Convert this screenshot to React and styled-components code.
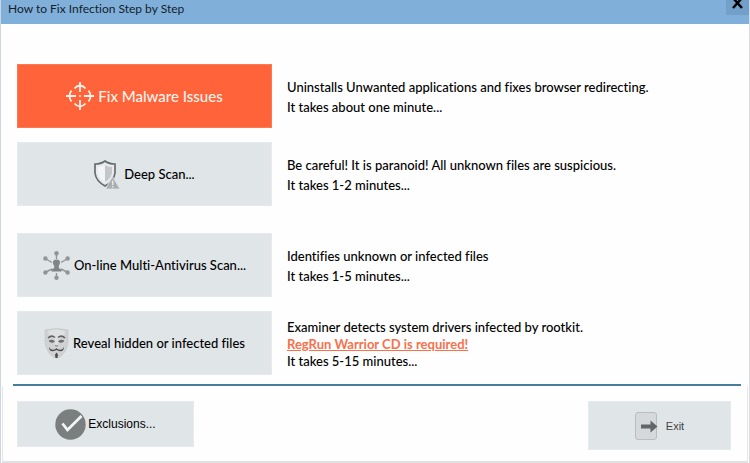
import React from "react";
import styled, { createGlobalStyle } from "styled-components";

const GlobalStyle = createGlobalStyle`
	* {
		box-sizing: border-box;
	}

	body {
		margin: 0;
		background: #fefefe;
		color: #000;
		font-family: Lato, "Open Sans", sans-serif;
		font-size: 13px;
		font-weight: 500;
		font-variant-ligatures: none;
	}

	h1, p {
		margin: 0;
	}
`;

const StyledWindow = styled.div`
	display: flex;
	flex-direction: column;
	min-height: 100vh;
	border-left: 1px solid #cdd5df;
	border-right: 1px solid #d9dce2;
`;

const StyledTitleBar = styled.header`
	display: flex;
	justify-content: space-between;
	align-items: flex-start;
	height: 24px;
	padding-left: 7px;
	background: #80b0da;
`;

const StyledTitle = styled.h1`
	color: #15202b;
	font-size: 12px;
	font-weight: normal;
	line-height: 18px;
`;

const StyledClose = styled.button`
	display: flex;
	justify-content: center;
	width: 23px;
	height: 15px;
	padding: 0;
	border: 0;
	background: #73a0c8;
`;

const StyledSteps = styled.main`
	display: flex;
	flex-direction: column;
	gap: 27px;
	padding: 40px 16px 9px;
`;

const StyledGroup = styled.section`
	display: flex;
	flex-direction: column;
	gap: 14px;
`;

const StyledStep = styled.div`
	display: grid;
	grid-template-columns: 255px 1fr;
	align-items: center;
	gap: 15px;
`;

const StyledButton = styled.button`
	display: flex;
	align-items: center;
	justify-content: center;
	gap: ${({ $gap }) => $gap || "4px"};
	height: ${({ $height }) => $height || "64px"};
	width: ${({ $width }) => $width || "100%"};
	padding: 0;
	border: 1px solid ${({ $primary }) => ($primary ? "#fb7a52" : "#e6eaec")};
	background: ${({ $primary }) => ($primary ? "#ff6339" : "#e0e5e8")};
	color: ${({ $primary }) => ($primary ? "#fff3ee" : "#000")};
	font-family: inherit;
	font-size: ${({ $primary }) => ($primary ? "15px" : "13px")};
	font-weight: inherit;
	font-variant-ligatures: inherit;
	white-space: nowrap;

	& > svg {
		flex-shrink: 0;
	}
`;

const StyledText = styled.div`
	padding-top: 2px;
	line-height: ${({ $tight }) => ($tight ? "17px" : "20px")};
`;

const StyledLink = styled.a`
	color: #f9704b;
	font-weight: bold;
	text-decoration: underline;
`;

const StyledFooter = styled.footer`
	display: flex;
	flex: 1;
	justify-content: space-between;
	align-items: flex-start;
	margin: 0 1px;
	padding: 15px 16px 11px 14px;
	border: 1px solid #e6e6e8;
	border-top: 0;
	border-bottom: 2px solid #e0e0e2;
	font-family: "Liberation Sans", Arial, sans-serif;
`;

const StyledRule = styled.hr`
	width: calc(100% - 20px);
	height: 2px;
	margin: 0 8px 0 12px;
	border: 0;
	background: #477e99;
`;

const StyledLabel = styled.span`
	color: ${({ $muted }) => ($muted ? "#444" : "#000")};
	font-size: ${({ $muted }) => ($muted ? "11px" : "12px")};
`;

function CloseIcon() {
	return (
		<svg width="11" height="9" viewBox="0 0 11 9" stroke="#000" strokeWidth="2.4">
			<path d="M1 -2 L10 8 M10 -2 L1 8" />
		</svg>
	);
}

function TargetIcon() {
	return (
		<svg width="28" height="28" viewBox="0 0 28 28" fill="none" stroke="#fff0e9" strokeWidth="1.8">
			<path d="M14 0v10M14 18v10M0 14h10M18 14h10" />
			<path d="M8.500 6.500Q11 3.500 14 3.500T19.500 6.500M8.500 21.500Q11 24.500 14 24.500T19.500 21.500M5.500 8.500Q3.500 11 3.500 14T5.500 19.500M22.500 8.500Q24.500 11 24.500 14T22.500 19.500" />
			<circle cx="14" cy="14" r="1" fill="#fff0e9" stroke="none" />
		</svg>
	);
}

function ShieldIcon() {
	return (
		<svg width="26" height="29" viewBox="0 0 26 29">
			<path d="M11 1Q15 4 21 4V13Q20 21 11 26Q2 21 1 13V4Q7 4 11 1Z" fill="#e8ebed" stroke="#686c6e" strokeWidth="1.700" />
			<path d="M11 5Q14 7 18 7V13Q17 19 11 22Q5 19 4 13V7Q8 7 11 5Z" fill="#f3f4f5" />
			<path d="M11 5Q14 7 18 7V13Q17 19 11 22Z" fill="#c3c7c9" />
			<path d="M18.500 16.500L26 29H11.500Z" fill="#a9adae" stroke="#e0e5e8" strokeWidth="0.800" />
			<path d="M18.700 20.500V25M18.700 26V27.500" stroke="#e5e9eb" strokeWidth="1.500" />
		</svg>
	);
}

function NetworkIcon() {
	return (
		<svg width="27" height="29" viewBox="0 0 27 29" fill="#909596" stroke="#909596">
			<path d="M13.500 3V8M13.500 22V26M3 8L9 11.500M24 8L18 11.500M3 21L9 18M24 21L18 18" fill="none" strokeWidth="1.400" />
			<g stroke="none">
				<circle cx="13.500" cy="2.300" r="2.200" />
				<circle cx="13.500" cy="26.700" r="2.200" />
				<circle cx="2.400" cy="7.500" r="2.200" />
				<circle cx="24.600" cy="7.500" r="2.200" />
				<circle cx="2.400" cy="21.500" r="2.200" />
				<circle cx="24.600" cy="21.500" r="2.200" />
				<path d="M13.500 8.500C17.500 8.500 17.800 12 15.800 14.800V17L18.500 18.500V20.500H8.500V18.500L11.200 17V14.800C9.200 12 9.500 8.500 13.500 8.500Z" fill="#7f8485" />
			</g>
		</svg>
	);
}

function MaskIcon() {
	return (
		<svg width="25" height="31" viewBox="0 0 25 31" fill="none" stroke="#5e6162">
			<path d="M1 2Q12.500 -1 24 2L24 14Q23 23 17 28Q12.500 32 8 28Q2 23 1 14Z" fill="#cfd1d2" stroke="#bfc3c4" strokeWidth="0.600" />
			<path d="M4 3Q12.500 0 21 3L20 8L14 11V17H11V11L5 8Z" fill="#dfe0e1" stroke="none" />
			<path d="M4 10Q7.500 6.500 11 9.500M14 9.500Q17.500 6.500 21 10" strokeWidth="1.500" />
			<path d="M5 13Q8 11 10.500 13.500Q7.500 15.500 5 13M14.500 13.500Q17 11 20 13Q17.500 15.500 14.500 13.500" fill="#747778" strokeWidth="0.700" />
			<path d="M11 17.500Q12.500 18.500 14 17.500" strokeWidth="0.800" />
			<path d="M5 19Q6.500 22.500 10 21.500Q12 21 12.500 20Q13 21 15 21.500Q18.500 22.500 20 19Q20 24 15 23L12.500 22L10 23Q5 24 5 19Z" fill="#4b4e4f" stroke="none" />
			<path d="M12.500 24.500L14 26.500L13.500 30H11.500L11 26.500Z" fill="#4b4e4f" stroke="none" />
		</svg>
	);
}

function CheckIcon() {
	return (
		<svg width="31" height="31" viewBox="0 0 31 31">
			<circle cx="15.500" cy="15.500" r="15.200" fill="#7b7e7f" />
			<path d="M7.500 14.500L12.500 21L26.500 7" fill="none" stroke="#f4f5f5" strokeWidth="2.800" />
		</svg>
	);
}

function ExitIcon() {
	return (
		<svg width="23" height="28" viewBox="0 0 23 28">
			<rect x="0.500" y="0.500" width="21" height="27" rx="2.500" fill="#d5d9db" stroke="#b9bdbf" />
			<path d="M6 12.500H15.500V8.500L22.500 14.500L15.500 20.500V16.500H6Z" fill="#636566" />
		</svg>
	);
}

export default function App() {
	return (
		<>
			<GlobalStyle />
			<StyledWindow>
				<StyledTitleBar>
					<StyledTitle>How to Fix Infection Step by Step</StyledTitle>
					<StyledClose type="button" aria-label="Close">
						<CloseIcon />
					</StyledClose>
				</StyledTitleBar>
				<StyledSteps>
					<StyledGroup>
						<StyledStep>
							<StyledButton type="button" $primary>
								<TargetIcon />
								Fix Malware Issues
							</StyledButton>
							<StyledText>
								<p>Uninstalls Unwanted applications and fixes browser redirecting.</p>
								<p>It takes about one minute...</p>
							</StyledText>
						</StyledStep>
						<StyledStep>
							<StyledButton type="button">
								<ShieldIcon />
								Deep Scan...
							</StyledButton>
							<StyledText>
								<p>Be careful! It is paranoid! All unknown files are suspicious.</p>
								<p>It takes 1-2 minutes...</p>
							</StyledText>
						</StyledStep>
					</StyledGroup>
					<StyledGroup>
						<StyledStep>
							<StyledButton type="button">
								<NetworkIcon />
								On-line Multi-Antivirus Scan...
							</StyledButton>
							<StyledText>
								<p>Identifies unknown or infected files</p>
								<p>It takes 1-5 minutes...</p>
							</StyledText>
						</StyledStep>
						<StyledStep>
							<StyledButton type="button">
								<MaskIcon />
								Reveal hidden or infected files
							</StyledButton>
							<StyledText $tight>
								<p>Examiner detects system drivers infected by rootkit.</p>
								<p>
									<StyledLink href="#warrior">RegRun Warrior CD is required!</StyledLink>
								</p>
								<p>It takes 5-15 minutes...</p>
							</StyledText>
						</StyledStep>
					</StyledGroup>
				</StyledSteps>
				<StyledRule />
				<StyledFooter>
					<StyledButton type="button" $width="177px" $height="46px" $gap="2px">
						<CheckIcon />
						<StyledLabel>Exclusions...</StyledLabel>
					</StyledButton>
					<StyledButton type="button" $width="143px" $height="49px" $gap="8px">
						<ExitIcon />
						<StyledLabel $muted>Exit</StyledLabel>
					</StyledButton>
				</StyledFooter>
			</StyledWindow>
		</>
	);
}
